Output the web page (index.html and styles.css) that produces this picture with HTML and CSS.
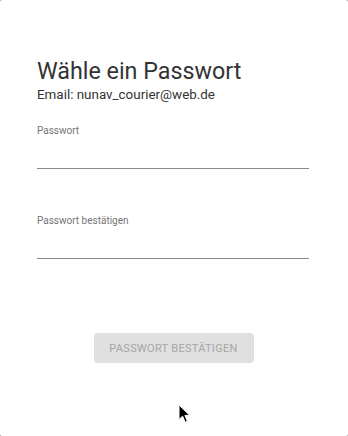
FILE: index.html
```html
<!DOCTYPE html>
<html lang="de">
<head>
<meta charset="utf-8">
<title>Wähle ein Passwort</title>
<link rel="stylesheet" href="styles.css">
</head>
<body>
<div class="dialog">
  <h1 class="title">Wähle ein Passwort</h1>
  <p class="email">Email: nunav_courier@web.de</p>
  <div class="field">
    <label class="label" for="pw1">Passwort</label>
    <input class="input" id="pw1" type="password">
  </div>
  <div class="field">
    <label class="label" for="pw2">Passwort bestätigen</label>
    <input class="input" id="pw2" type="password">
  </div>
  <div class="actions">
    <button class="btn" disabled>Passwort bestätigen</button>
  </div>
  <svg class="cursor" width="14" height="20" viewBox="0 0 14 20">
    <path d="M1 1 L1 15.5 L4.6 12.2 L7.2 18.2 L9.4 17.2 L6.9 11.4 L11.8 11.4 Z" fill="#000" stroke="#fff" stroke-width="1"/>
  </svg>
</div>
</body>
</html>
```
FILE: styles.css
```css
html, body {
  margin: 0;
  padding: 0;
  background: #9a9a9a;
}
body {
  font-family: Roboto, "Liberation Sans", sans-serif;
}
.dialog {
  position: relative;
  box-sizing: border-box;
  width: 348px;
  height: 436px;
  background: #fff;
  border-radius: 2px;
  padding: 57px 39px 0 37px;
}
.title {
  margin: 0;
  font-size: 23.3px;
  font-weight: 400;
  line-height: 28px;
  color: #333;
}
.email {
  margin: 0;
  font-size: 13.4px;
  line-height: 20px;
  color: #333;
}
.field {
  margin-top: 19px;
  display: flex;
  flex-direction: column;
}
.field + .field {
  margin-top: 45px;
}
.label {
  font-size: 10px;
  line-height: 14px;
  color: #757575;
}
.input {
  margin-top: 10px;
  height: 20px;
  border: none;
  border-bottom: 1px solid #8a8a8a;
  padding: 0;
  outline: none;
  background: transparent;
}
.actions {
  display: flex;
  justify-content: center;
  margin-top: 74px;
  padding-left: 1px;
}
.btn {
  width: 160px;
  height: 30px;
  border: none;
  border-radius: 4px;
  background: #e0e0e0;
  color: #a6a6a6;
  font-family: Roboto, "Liberation Sans", sans-serif;
  font-size: 11px;
  font-weight: 400;
  letter-spacing: 0.3px;
  text-transform: uppercase;
  padding: 0;
}
.cursor {
  position: absolute;
  left: 178px;
  top: 404px;
}
```
